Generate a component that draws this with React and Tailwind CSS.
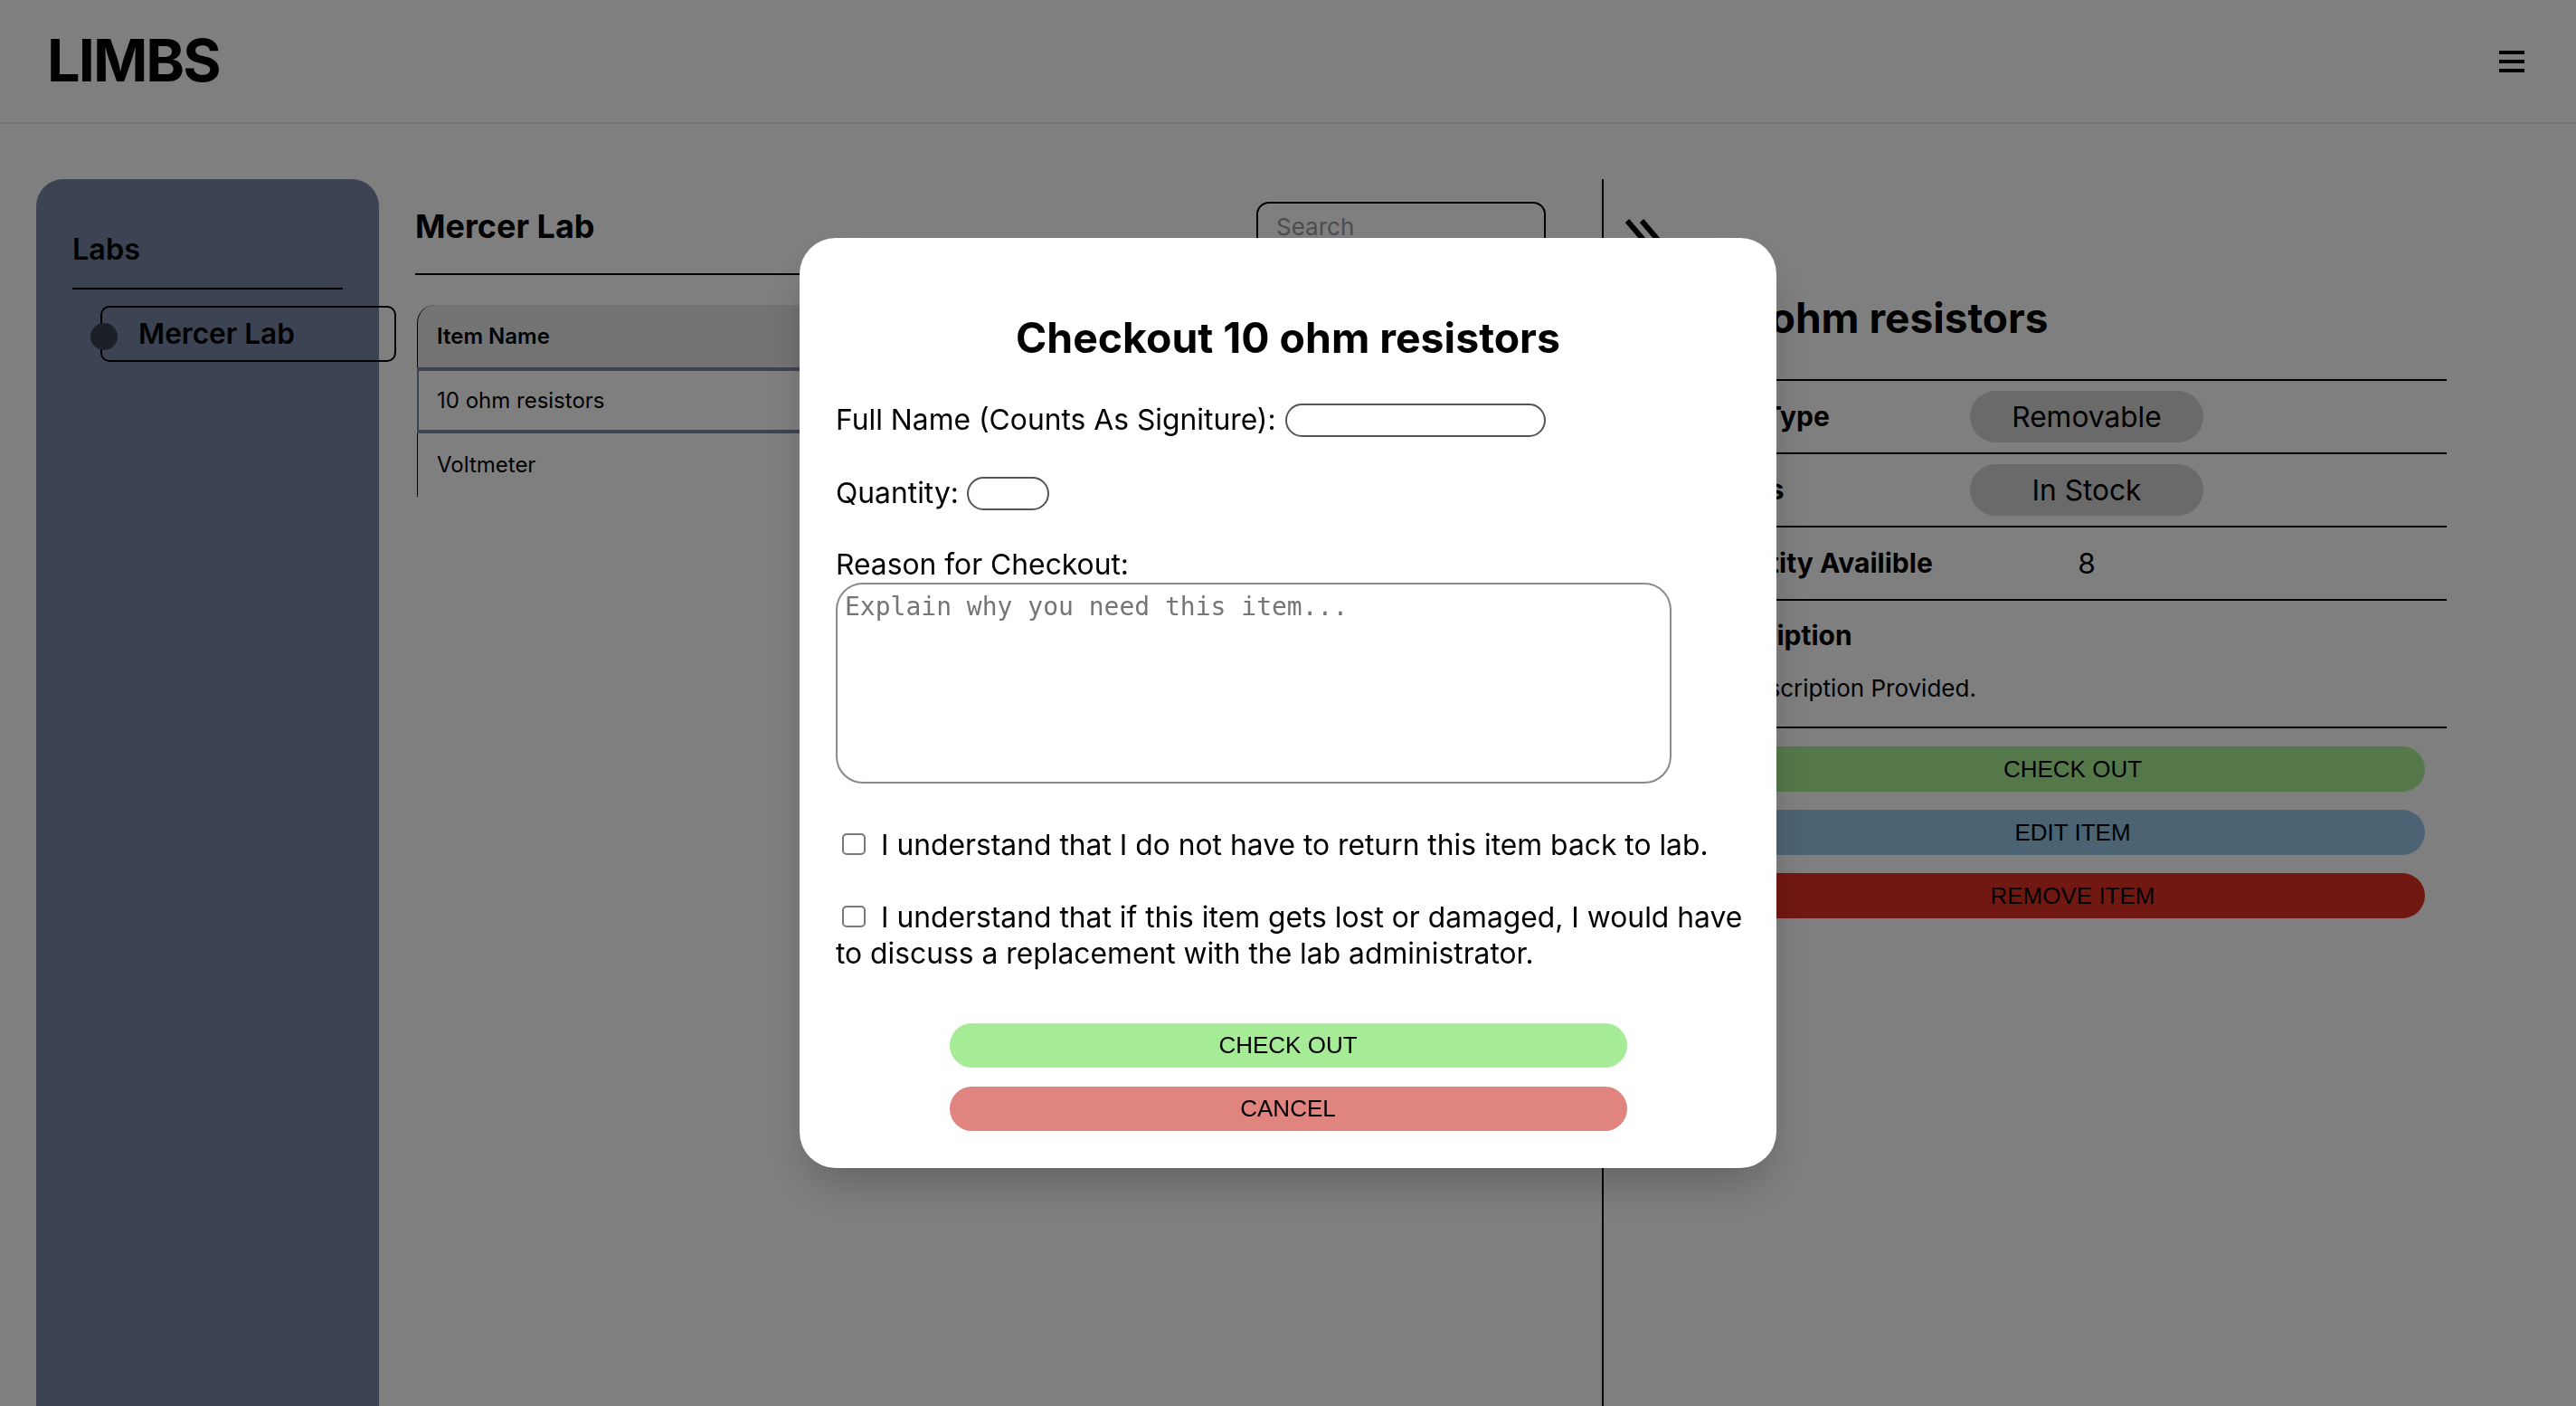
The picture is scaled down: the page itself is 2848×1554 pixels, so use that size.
import React from 'react';

const items = ['10 ohm resistors', 'Voltmeter'];

function Header() {
  return (
    <header className="flex h-[137px] items-center justify-between border-b-2 border-[#dedede] pl-[52px] pr-[57px]">
      <h1 className="text-[64.8px] font-bold leading-none tracking-[-0.03em]">LIMBS</h1>
      <button aria-label="Menu" className="flex w-[28px] flex-col gap-[6px]">
        <span className="block h-[4px] bg-black" />
        <span className="block h-[4px] bg-black" />
        <span className="block h-[4px] bg-black" />
      </button>
    </header>
  );
}

function Sidebar() {
  return (
    <aside className="ml-[40px] h-[1356px] w-[379px] shrink-0 rounded-t-[30px] bg-[#7888a6] px-[40px] pt-[58px]">
      <h2 className="border-b-2 border-black pb-[22px] text-[32.4px] font-semibold leading-[40px]">Labs</h2>
      <button className="relative mt-[18px] ml-[31px] flex h-[62px] w-[327px] items-center rounded-[10px] border-2 border-black pl-[40px] text-[31.6px] font-semibold">
        <span className="absolute left-[-13px] top-[17px] h-[30px] w-[30px] rounded-full bg-[#383e4c]" />
        Mercer Lab
      </button>
    </aside>
  );
}

function ItemTable() {
  return (
    <div className="mt-[33px] ml-[2px] text-[24px]">
      <div className="flex h-[69px] items-center rounded-tl-[20px] border-l border-black bg-[#e6e6e6] pl-[21px] font-semibold">
        Item Name
      </div>
      <div className="flex h-[73px] items-center border-y-4 border-l-2 border-[#7888a6] pl-[20px]">{items[0]}</div>
      <div className="flex h-[70px] items-center border-l border-black pl-[21px]">{items[1]}</div>
    </div>
  );
}

function DetailRow({ label, children }) {
  return (
    <div className="flex h-[81px] items-center border-b-2 border-black">
      <span className="w-[300px] text-[30px] font-bold">{label}</span>
      <div className="flex w-[258px] justify-center text-[31.7px]">{children}</div>
    </div>
  );
}

function Pill({ children }) {
  return (
    <span className="flex h-[57px] w-[258px] items-center justify-center rounded-full bg-[#d4d4d4]">{children}</span>
  );
}

function ItemDetails() {
  return (
    <section className="h-[1356px] flex-1 border-l-2 border-black pt-[42px]">
      <svg className="ml-[22px] block h-[50px] w-[50px]" viewBox="0 0 50 50" fill="none" stroke="black" strokeWidth="6">
        <polyline points="4,4 22,25 4,46" />
        <polyline points="20,4 38,25 20,46" />
      </svg>
      <div className="ml-[105px] w-[827px]">
        <div className="border-b-2 border-black pb-[40px]">
          <h2 className="mt-[33px] ml-[17px] text-[46px] font-bold leading-[56px]">10 ohm resistors</h2>
        </div>
        <DetailRow label="Item Type"><Pill>Removable</Pill></DetailRow>
        <DetailRow label="Status"><Pill>In Stock</Pill></DetailRow>
        <DetailRow label="Quantity Availible">8</DetailRow>
        <div className="border-b-2 border-black pt-[18px] pb-[22px]">
          <h3 className="text-[30px] font-bold leading-[40px]">Description</h3>
          <p className="mt-[19px] text-[26px] leading-[40px]">No Description Provided.</p>
        </div>
        <div className="mx-[24px] mt-[20px] flex flex-col gap-[20px] font-['Liberation_Sans',Arial,sans-serif] text-[26px]">
          <button className="h-[50px] rounded-full bg-[#aaf096]">CHECK OUT</button>
          <button className="h-[50px] rounded-full bg-[#97c6e6]">EDIT ITEM</button>
          <button className="h-[50px] rounded-full bg-[#e43024]">REMOVE ITEM</button>
        </div>
      </div>
    </section>
  );
}

function CheckoutModal() {
  return (
    <div className="fixed inset-0 flex items-center justify-center bg-black/50">
      <div className="w-[1080px] rounded-[40px] bg-white px-[40px] pt-[82px] pb-[41px] text-[31.8px] shadow-2xl">
        <h2 className="text-center text-[46.4px] font-bold leading-[56px]">Checkout 10 ohm resistors</h2>
        <div className="mt-[43px] flex h-[40px] items-center">
          <label>Full Name (Counts As Signiture):</label>
          <input className="ml-[10px] h-[37px] w-[288px] rounded-full border-2 border-[#555]" />
        </div>
        <div className="mt-[41px] flex h-[40px] items-center">
          <label>Quantity:</label>
          <input className="ml-[9px] h-[37px] w-[91px] rounded-full border-2 border-[#555]" />
        </div>
        <label className="mt-[39px] block leading-[40px]">Reason for Checkout:</label>
        <textarea
          placeholder="Explain why you need this item..."
          className="block h-[222px] w-[924px] resize-none rounded-[30px] border-2 border-[#8a8a8a] p-[8px] font-['DejaVu_Sans_Mono',monospace] text-[28px] leading-[34px] placeholder:text-[#757575]"
        />
        <p className="mt-[48px] leading-[40px]">
          <input type="checkbox" className="ml-[7px] mr-[8px] inline-block h-[24px] w-[26px] appearance-none rounded-[5px] border-2 border-[#7a7a7a] bg-white align-baseline" />
          {' '}I understand that I do not have to return this item back to lab.
        </p>
        <p className="-mr-[24px] mt-[40px] leading-[40px]">
          <input type="checkbox" className="ml-[7px] mr-[8px] inline-block h-[24px] w-[26px] appearance-none rounded-[5px] border-2 border-[#7a7a7a] bg-white align-baseline" />
          {' '}I understand that if this item gets lost or damaged, I would have to discuss a replacement with the lab administrator.
        </p>
        <div className="mt-[57px] flex flex-col items-center gap-[21px] font-['Liberation_Sans',Arial,sans-serif] text-[26px]">
          <button className="h-[49px] w-[749px] rounded-full bg-[#a6eb96]">CHECK OUT</button>
          <button className="h-[49px] w-[749px] rounded-full bg-[#e08480]">CANCEL</button>
        </div>
      </div>
    </div>
  );
}

export default function App() {
  return (
    <div className="relative h-[1554px] overflow-hidden bg-white font-[Inter,sans-serif] text-black">
      <Header />
      <div className="flex pt-[61px]">
        <Sidebar />
        <main className="ml-[40px] w-[1250px] shrink-0 pt-[25px]">
          <div className="flex items-center justify-between border-b-2 border-black pb-[25px]">
            <h2 className="text-[36px] font-bold leading-[44px]">Mercer Lab</h2>
            <input
              placeholder="Search"
              className="h-[54px] w-[320px] rounded-[14px] border-2 border-black px-[20px] text-[26px] placeholder:text-[#9a9a9a]"
            />
          </div>
          <ItemTable />
        </main>
        <div className="ml-[62px] flex-1">
          <ItemDetails />
        </div>
      </div>
      <CheckoutModal />
    </div>
  );
}
